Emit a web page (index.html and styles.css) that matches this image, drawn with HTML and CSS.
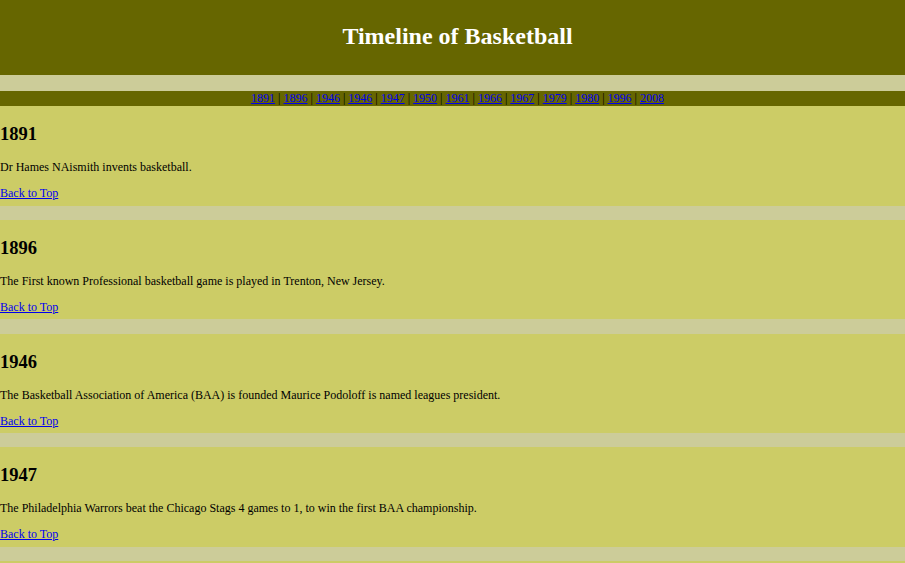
FILE: index.html
```html
<!DOCTYPE html>
<html lang="en">
<head>
<meta charset="utf-8">
<title>Timeline of Basketball</title>
<link rel="stylesheet" href="styles.css">
</head>
<body>
<header class="masthead" id="top">
  <h1 class="title">Timeline of Basketball</h1>
</header>
<nav class="years">
  <a href="#y1891">1891</a> | <a href="#y1896">1896</a> | <a href="#y1946">1946</a> | <a href="#y1946b">1946</a> | <a href="#y1947">1947</a> | <a href="#y1950">1950</a> | <a href="#y1961">1961</a> | <a href="#y1966">1966</a> | <a href="#y1967">1967</a> | <a href="#y1979">1979</a> | <a href="#y1980">1980</a> | <a href="#y1996">1996</a> | <a href="#y2008">2008</a>
</nav>
<main class="timeline">
  <section class="event" id="y1891">
    <h3 class="year">1891</h3>
    <p class="desc">Dr Hames NAismith invents basketball.</p>
    <a class="back" href="#top">Back to Top</a>
  </section>
  <section class="event" id="y1896">
    <h3 class="year">1896</h3>
    <p class="desc">The First known Professional basketball game is played in Trenton, New Jersey.</p>
    <a class="back" href="#top">Back to Top</a>
  </section>
  <section class="event" id="y1946">
    <h3 class="year">1946</h3>
    <p class="desc">The Basketball Association of America (BAA) is founded Maurice Podoloff is named leagues president.</p>
    <a class="back" href="#top">Back to Top</a>
  </section>
  <section class="event" id="y1947">
    <h3 class="year">1947</h3>
    <p class="desc">The Philadelphia Warrors beat the Chicago Stags 4 games to 1, to win the first BAA championship.</p>
    <a class="back" href="#top">Back to Top</a>
  </section>
  <section class="event" id="y1946b">
    <h3 class="year">1946</h3>
    <p class="desc">The first BAA game is played in Toronto.</p>
    <a class="back" href="#top">Back to Top</a>
  </section>
</main>
</body>
</html>
```
FILE: styles.css
```css
html, body {
  margin: 0;
  padding: 0;
}
body {
  background: #cccc99;
  font-family: "Liberation Serif", "Times New Roman", serif;
  font-size: 12px;
  color: #000;
}
.masthead {
  background: #666600;
  height: 75px;
  box-sizing: border-box;
  padding: 22px 0 0 10px;
  text-align: center;
}
.title {
  margin: 0;
  font-size: 24px;
  line-height: 28px;
  font-weight: bold;
  color: #fff;
}
.years {
  margin-top: 16px;
  background: #666600;
  height: 15px;
  line-height: 15px;
  padding-left: 10px;
  text-align: center;
  font-size: 12px;
}
a {
  color: #0000ee;
}
.timeline {
  display: flex;
  flex-direction: column;
  gap: 14.25px;
}
.event {
  background: #cccc66;
  padding: 17px 0 5.5px;
}
.year {
  margin: 0;
  font-size: 18.5px;
  line-height: 22px;
  font-weight: bold;
}
.desc {
  margin: 15px 0 0;
  line-height: 14px;
}
.back {
  display: block;
  width: max-content;
  margin-top: 12px;
  line-height: 14px;
}
```
